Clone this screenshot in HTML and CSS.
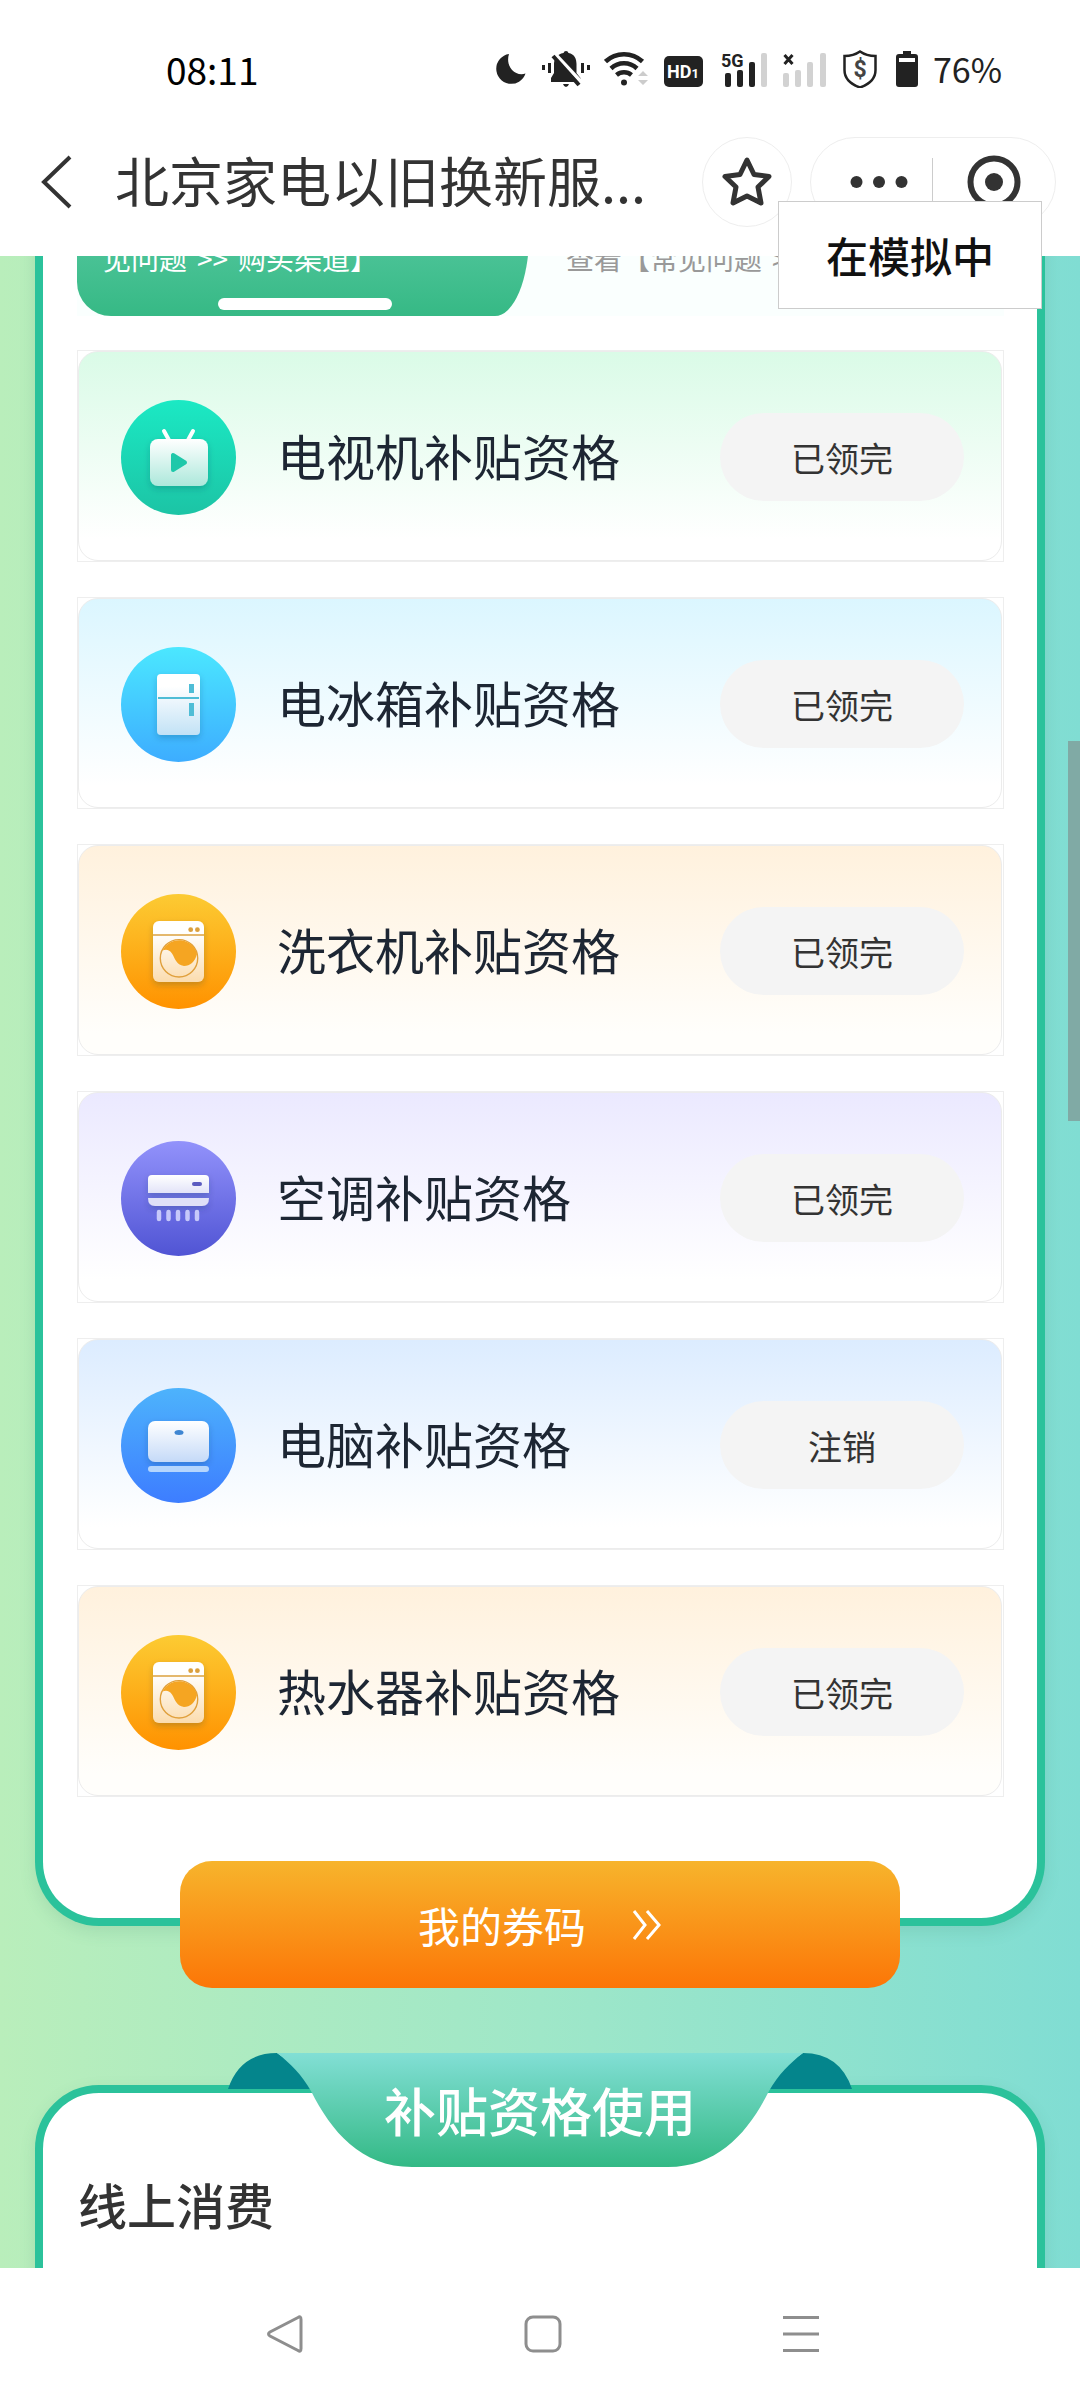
FILE: index.html
```html
<!DOCTYPE html>
<html lang="zh-CN">
<head>
<meta charset="utf-8">
<meta name="viewport" content="width=device-width">
<title>北京家电以旧换新服务</title>
<link rel="stylesheet" href="styles.css">
</head>
<body>
<svg class="defs" width="0" height="0" aria-hidden="true">
  <defs>
    <linearGradient id="g-tv" x2="0" y2="1"><stop stop-color="#1be9c4"/><stop offset="1" stop-color="#1cc4a5"/></linearGradient>
    <linearGradient id="g-fridge" x2="0" y2="1"><stop stop-color="#4be7ff"/><stop offset="1" stop-color="#3dadff"/></linearGradient>
    <linearGradient id="g-wash" x2="0" y2="1"><stop stop-color="#fccb33"/><stop offset="1" stop-color="#ff9200"/></linearGradient>
    <linearGradient id="g-air" x2="0" y2="1"><stop stop-color="#9292fb"/><stop offset="1" stop-color="#5054d4"/></linearGradient>
    <linearGradient id="g-pc" x2="0" y2="1"><stop stop-color="#4db3fc"/><stop offset="1" stop-color="#3d7dff"/></linearGradient>
    <linearGradient id="b-tv" x2="0" y2="1"><stop stop-color="#fff"/><stop offset="1" stop-color="#ace8db"/></linearGradient>
    <linearGradient id="b-fridge" x2="0" y2="1"><stop offset=".2" stop-color="#fff"/><stop offset="1" stop-color="#c2e2f6"/></linearGradient>
    <linearGradient id="b-wash" x2="0" y2="1"><stop offset=".2" stop-color="#fff"/><stop offset="1" stop-color="#fbdcae"/></linearGradient>
    <linearGradient id="b-air" x2="0" y2="1"><stop stop-color="#fff"/><stop offset="1" stop-color="#e2e3f8"/></linearGradient>
    <linearGradient id="b-pc" x2="0" y2="1"><stop stop-color="#fff"/><stop offset="1" stop-color="#c5daf8"/></linearGradient>
    <linearGradient id="g-ribbon" x2="0" y2="1"><stop stop-color="#82dfd5"/><stop offset="1" stop-color="#33b985"/></linearGradient>
    <filter id="soft" x="-20%" y="-20%" width="140%" height="150%"><feDropShadow dx="0" dy="3" stdDeviation="3" flood-color="#003050" flood-opacity=".22"/></filter>
    <symbol id="washer" viewBox="0 0 115 115">
      <circle cx="57.5" cy="57.5" r="57.5" fill="url(#g-wash)"/>
      <rect x="32" y="27" width="51" height="61" rx="6" fill="url(#b-wash)" filter="url(#soft)"/>
      <path d="M32 41h51" stroke="#dba03e" stroke-width="1.5"/>
      <circle cx="69.700" cy="35.700" r="2.400" fill="#dba03e"/><circle cx="76.400" cy="35.700" r="2.400" fill="#dba03e"/>
      <circle cx="58" cy="64.300" r="18.700" fill="none" stroke="#e0a03c" stroke-width="1.400"/>
      <path d="M41.500 56.500A18.500 18.500 0 0 1 76 60C74 68 69 72 63 72C55 71 54 64 51 59.500C48.500 55.500 45 55 41.500 56.500Z" fill="#f5a522"/>
    </symbol>
  </defs>
</svg>

<div class="app">
  <div class="status">
    <time class="clock">08:11</time>
    <div class="status-icons">
      <svg width="32" height="38" viewBox="0 0 32 38" fill="#222"><path d="M13 4A15 15 0 1 0 29.500 23.500C19 27 9 16 13 4Z"/></svg>
      <svg width="48" height="38" viewBox="0 0 48 38" fill="#222"><path d="M24 1q2 0 2.500 2c6 1 8 6 8 11v9l4 5v4H9v-4l3-5v-9c0-5 3-10 9.500-11q.5-2 2.500-2ZM21 34h6q-1 3-3 3t-3-3Z"/><path d="M12 3l30 32" stroke="#fff" stroke-width="4"/><path d="M11 6l26 29" stroke="#222" stroke-width="4"/><path d="M0 15h3v5H0zM6 13h3v10H6zM39 13h3v10h-3zM45 15h3v5h-3z"/></svg>
      <svg width="46" height="38" viewBox="0 0 46 38" fill="none" stroke="#222" stroke-width="4.500"><path d="M1.500 11.500a27 27 0 0 1 37 0M7 18.500a19 19 0 0 1 26 0M12.500 25a11.500 11.500 0 0 1 15 0"/><circle cx="20" cy="32.500" r="3" fill="#222" stroke="none"/><path d="M34 26l5-5 5 5zM34 30l5 5 5-5z" fill="#ccc" stroke="none"/></svg>
      <svg width="43" height="38" viewBox="0 0 43 38"><rect y="6" width="39" height="31" rx="5" fill="#222"/><text class="hd" x="3" y="28">HD<tspan class="hd-sub">1</tspan></text></svg>
      <svg width="48" height="38" viewBox="0 0 48 38" fill="#222"><text class="net" x="0" y="17">5G</text><rect x="4" y="23" width="6" height="14" rx="2"/><rect x="16" y="20" width="6" height="17" rx="2"/><rect x="28" y="12" width="6" height="25" rx="2"/><rect x="40" y="3" width="6" height="34" rx="2" fill="#d2d2d2"/></svg>
      <svg width="46" height="38" viewBox="0 0 46 38" fill="#d2d2d2"><path d="M1.500 5l8 9M9.500 5l-8 9" stroke="#222" stroke-width="3"/><rect y="23" width="6" height="14" rx="2"/><rect x="12" y="20" width="6" height="17" rx="2"/><rect x="24" y="12" width="6" height="25" rx="2"/><rect x="37" y="3" width="6" height="34" rx="2"/></svg>
      <svg width="38" height="38" viewBox="0 0 38 38"><path d="M17 1.500C22 5 27 6 32.500 6v14q0 12-15.500 17.500Q1.500 32 1.500 20V6C7 6 12 5 17 1.500Z" fill="none" stroke="#222" stroke-width="2.500"/><text class="dollar" x="17" y="27">$</text></svg>
      <svg width="24" height="38" viewBox="0 0 24 38" fill="#222"><path d="M8 1h8v3h4q3 0 3 3v27q0 3-3 3H4q-3 0-3-3V7q0-3 3-3h4z"/><path d="M4 8h16v4H4z" fill="#fff"/></svg>
      <span class="battery">76%</span>
    </div>
  </div>

  <header class="header">
    <button class="icon-btn back" aria-label="返回"><svg width="32" height="54" viewBox="0 0 32 54" fill="none" stroke="#333" stroke-width="4"><path d="M29 2L3 27l26 25"/></svg></button>
    <h1 class="title">北京家电以旧换新服...</h1>
    <button class="icon-btn star" aria-label="收藏"><svg width="54" height="54" viewBox="0 0 54 54" fill="none" stroke="#333" stroke-width="5" stroke-linejoin="round"><path d="M27 5l7 14.500 15 2-11 10.500 3 16L27 41 13 48l3-16L5 21.500l15-2z"/></svg></button>
    <div class="capsule">
      <button class="icon-btn cap-left" aria-label="更多"><svg width="58" height="54" viewBox="0 0 58 54" fill="#333"><circle cx="6.500" cy="27" r="6"/><circle cx="29" cy="27" r="6"/><circle cx="51.500" cy="27" r="6"/></svg></button>
      <button class="icon-btn cap-right" aria-label="关闭"><svg width="54" height="54" viewBox="0 0 54 54"><circle cx="27" cy="27" r="23.500" fill="none" stroke="#333" stroke-width="6"/><circle cx="27" cy="27" r="9" fill="#333"/></svg></button>
    </div>
    <div class="tooltip">在模拟中</div>
  </header>

  <main class="page">
    <section class="panel panel-first">
      <div class="tabs">
        <button class="tab tab-active"><span>见问题<span class="arrows">&gt;&gt;</span>购买渠道】</span></button>
        <button class="tab"><span>查看【常见问题<span class="arrows">&gt;&gt;</span></span></button>
      </div>
      <ul class="list">
        <li class="frame"><div class="row row-green">
          <svg class="icon" viewBox="0 0 115 115"><circle cx="57.5" cy="57.5" r="57.5" fill="url(#g-tv)"/><path d="M43 31l6 11M72 31l-6 11" stroke="#fff" stroke-width="4" stroke-linecap="round"/><rect x="29" y="39" width="58" height="47" rx="8" fill="url(#b-tv)" filter="url(#soft)"/><path d="M52 55v15l12-7.500z" fill="#1fc8aa" stroke="#1fc8aa" stroke-width="4" stroke-linejoin="round"/></svg>
          <h2 class="name">电视机补贴资格</h2><button class="pill">已领完</button></div></li>
        <li class="frame"><div class="row row-cyan">
          <svg class="icon" viewBox="0 0 115 115"><circle cx="57.5" cy="57.5" r="57.5" fill="url(#g-fridge)"/><rect x="36" y="27" width="43" height="61" rx="4" fill="url(#b-fridge)" filter="url(#soft)"/><path d="M37 51h41" stroke="#4fbdd6" stroke-width="2"/><path d="M68 37h5v9h-5zM68 56h5v13h-5z" fill="#4fbdd6"/></svg>
          <h2 class="name">电冰箱补贴资格</h2><button class="pill">已领完</button></div></li>
        <li class="frame"><div class="row row-orange">
          <svg class="icon" viewBox="0 0 115 115"><use href="#washer"/></svg>
          <h2 class="name">洗衣机补贴资格</h2><button class="pill">已领完</button></div></li>
        <li class="frame"><div class="row row-violet">
          <svg class="icon" viewBox="0 0 115 115"><circle cx="57.5" cy="57.5" r="57.5" fill="url(#g-air)"/><g filter="url(#soft)"><path d="M27 52V38q0-4 4-4h53q4 0 4 4v14z" fill="url(#b-air)"/><path d="M27 57h61q0 8-7 8H34q-7 0-7-8z" fill="#dfe0f7"/></g><rect x="71" y="41" width="10" height="4" rx="2" fill="#5b5bc0"/><path d="M38 71v7M47.500 71v7M57 71v7M66.500 71v7M76 71v7" stroke="#c6c8fa" stroke-width="4.500" stroke-linecap="round"/></svg>
          <h2 class="name">空调补贴资格</h2><button class="pill">已领完</button></div></li>
        <li class="frame"><div class="row row-blue">
          <svg class="icon" viewBox="0 0 115 115"><circle cx="57.5" cy="57.5" r="57.5" fill="url(#g-pc)"/><rect x="27" y="33" width="61" height="41" rx="7" fill="url(#b-pc)" filter="url(#soft)"/><ellipse cx="58" cy="44.500" rx="4.500" ry="2.500" fill="#3f86d2"/><rect x="27" y="78" width="61" height="6" rx="3" fill="#b5d6fd"/></svg>
          <h2 class="name">电脑补贴资格</h2><button class="pill">注销</button></div></li>
        <li class="frame"><div class="row row-orange">
          <svg class="icon" viewBox="0 0 115 115"><use href="#washer"/></svg>
          <h2 class="name">热水器补贴资格</h2><button class="pill">已领完</button></div></li>
      </ul>
    </section>

    <button class="codes">我的券码<svg width="30" height="32" viewBox="0 0 30 32" fill="none" stroke="#fff" stroke-width="3"><path d="M2 2l11 14L2 30M15 2l12 14-12 14"/></svg></button>

    <div class="ribbon">
      <svg width="624" height="114" viewBox="0 0 624 114"><path d="M0 36Q12 0 49 0L100 36ZM624 36Q612 0 575 0L524 36Z" fill="#04858c"/><path d="M49 0H575C562 10 550 22 541 38C521 78 491 114 440 114H184C133 114 103 78 83 38C74 22 62 10 49 0Z" fill="url(#g-ribbon)"/></svg>
      <h2 class="ribbon-text">补贴资格使用</h2>
    </div>
    <section class="panel panel-second"><h3 class="sub">线上消费</h3></section>
    <div class="scrollbar"></div>
  </main>

  <nav class="navbar">
    <button class="icon-btn" aria-label="返回"><svg width="38" height="38" viewBox="0 0 38 38"><path d="M32 2.500q3-2 3 2v29q0 4-3 2L4 21q-3-2 0-4z"/></svg></button>
    <button class="icon-btn" aria-label="主页"><svg width="38" height="38" viewBox="0 0 38 38"><rect x="2" y="2" width="34" height="34" rx="7"/></svg></button>
    <button class="icon-btn" aria-label="菜单"><svg width="38" height="38" viewBox="0 0 38 38"><path d="M1 2.500h36M1 19h36M1 35.500h36"/></svg></button>
  </nav>
</div>
</body>
</html>
```
FILE: styles.css
```css
* { box-sizing: border-box; margin: 0; padding: 0; }
body { font-family: "Noto Sans CJK SC", "Noto Sans", sans-serif; color: #333; background: #fff; }
button { font: inherit; color: inherit; border: 0; background: none; }
svg { display: block; flex: none; }
ul { list-style: none; }
.defs { position: absolute; }
.app { display: flex; flex-direction: column; height: 100vh; overflow: hidden; }

.status { display: flex; align-items: center; justify-content: space-between; height: 137px; padding: 0 78px 0 166px; flex: none; }
.clock { font-size: 37px; line-height: 50px; color: #000; }
.status-icons { display: flex; align-items: center; gap: 14px; }
.battery { font-size: 34px; line-height: 50px; color: #222; }
.hd { font: bold 18px "Roboto", sans-serif; fill: #fff; }
.hd-sub { font-size: 13px; }
.net { font: bold 18px "Roboto", sans-serif; }
.dollar { font: bold 23px "Roboto", sans-serif; fill: #444; text-anchor: middle; }

.header { position: relative; z-index: 2; display: flex; align-items: center; padding: 0 24px 29px 41px; flex: none; background: #fff; }
.icon-btn { display: flex; align-items: center; justify-content: center; }
.title { flex: 1; margin-left: 42px; padding-bottom: 4px; font-size: 54px; line-height: 86px; font-weight: 400; white-space: nowrap; }
.star { width: 90px; height: 90px; border: 1px solid #eee; border-radius: 45px; }
.capsule { display: flex; align-items: center; width: 246px; height: 90px; margin-left: 18px; border: 1px solid #eee; border-radius: 45px; }
.cap-left, .cap-right { flex: none; width: 50%; height: 48px; }
.cap-left { padding-left: 14px; border-right: 1px solid #ccc; }
.tooltip { position: absolute; top: 64px; right: 38px; width: 264px; border: 1px solid #ccc; background: #fff; color: #111; font-size: 42px; line-height: 106px; font-weight: 500; text-align: center; }

.page { position: relative; flex: 1; min-height: 0; overflow: hidden; background: linear-gradient(90deg, #b9eebb, #9fe7c8 50%, #80ddd3); }
.panel { margin: 0 35px; border: 8px solid #2bc29b; background: #fff; box-shadow: 0 6px 16px rgba(60, 130, 100, .15); }
.panel-first { margin-top: -60px; padding: 0 33px 121px 34px; border-top: 0; border-radius: 0 0 64px 64px; }
.tabs { display: flex; height: 120px; background: #fafffe; }
.tab { flex: 1; padding: 0 26px 24px; font-size: 28px; line-height: 42px; text-align: left; white-space: nowrap; color: #999; display: flex; align-items: flex-end; overflow: hidden; }
.tab > span { margin-bottom: 13px; }
.arrows { margin: 0 10px; }
.tab:last-child { padding-left: 37px; }
.tab-active { position: relative; flex: none; width: 452px; color: #fff; background: linear-gradient(#5ccba5, #36b985); border-radius: 0 0 34px 34px; border-bottom-right-radius: 34px 80px; }
.tab-active::after { content: ""; position: absolute; left: 141px; bottom: 6px; width: 174px; height: 12px; border-radius: 6px; background: #fff; }
.list { display: grid; gap: 35px; margin-top: 34px; }
.frame { padding-right: 1px; border: 1px solid #eee; }
.row { display: flex; align-items: center; height: 210px; padding: 2px 37px 0 42px; border: 1px solid #ececec; border-radius: 20px; }
.row-green { background: linear-gradient(#dafbe7, #fff 90%); }
.row-cyan { background: linear-gradient(#dbf6ff, #fff 90%); }
.row-orange { background: linear-gradient(#fff1dd, #fffefb 90%); }
.row-violet { background: linear-gradient(#ebe9ff, #fff 90%); }
.row-blue { background: linear-gradient(#dcecff, #fff 90%); }
.icon { width: 115px; height: 115px; }
.name { flex: 1; margin-left: 41px; padding-bottom: 4px; font-size: 49px; line-height: 72px; font-weight: 400; color: #1d2633; }
.pill { width: 244px; height: 88px; border-radius: 44px; background: #f4f4f4; font-size: 34px; }

.codes { position: relative; display: flex; align-items: center; justify-content: center; gap: 46px; width: 66.7%; height: 127px; margin: -65px auto 0; border-radius: 32px; background: linear-gradient(#f7b42c, #fc7607); color: #fff; font-size: 42px; }
.ribbon { position: relative; z-index: 1; display: grid; justify-content: center; margin: 65px 0 -82px; }
.ribbon > * { grid-area: 1 / 1; }
.ribbon-text { color: #fff; font-size: 52px; line-height: 114px; font-weight: 500; text-align: center; }
.panel-second { min-height: 400px; padding: 75px 35px; border-radius: 64px 64px 0 0; }
.sub { font-size: 49px; line-height: 72px; font-weight: 500; }
.scrollbar { position: absolute; right: 0; top: 23%; width: 12px; height: 380px; margin-top: 22px; background: #80aaa5; }

.navbar { display: flex; align-items: center; justify-content: center; gap: 220px; height: 132px; padding-left: 5px; flex: none; background: #fff; }
.navbar svg { fill: none; stroke: #8e8e8e; stroke-width: 3; }
```
